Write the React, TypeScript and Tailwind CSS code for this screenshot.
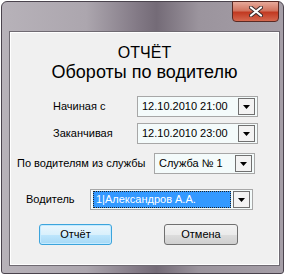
import React from "react";

const Arrow = () => (
  <svg width="7" height="4" viewBox="0 0 7 4">
    <path d="M0 0h7L3.5 4z" fill="#000" />
  </svg>
);

const Combo = ({
  value,
  width,
  selected,
}: {
  value: string;
  width: string;
  selected?: boolean;
}) => (
  <div
    className={`flex h-[21px] items-center border border-[#a7a7a7] bg-[#f4fbfb] pl-[2px] pr-[2px] ${width}`}
  >
    <div
      className={`flex h-[17px] flex-1 items-center overflow-hidden whitespace-nowrap pl-[2px] text-[11px] ${
        selected
          ? "border border-dotted border-[#222] bg-[#3399ff] text-white"
          : "text-black"
      }`}
    >
      {value}
    </div>
    <div className="ml-[2px] flex h-[17px] w-[17px] items-center justify-center border border-[#707070] bg-[#f3f3f3]">
      <Arrow />
    </div>
  </div>
);

export default function App() {
  return (
    <div
      className="h-[277px] w-[288px] bg-white pl-[1px] pt-[1px]"
      style={{ fontFamily: '"Liberation Sans", Arial, sans-serif' }}
    >
      <div className="relative flex h-[273px] w-[283px] flex-col rounded-t-[6px] rounded-b-[3px] border border-[#4a434d] bg-[linear-gradient(to_right,#b7b2b9_0%,#aca6ae_30%,#837a86_48%,#746b77_55%,#9b949d_70%,#a59ea7_100%)] pb-[7px] pl-[7px] pr-[3px] pt-[29px]">
        <div className="absolute left-[230px] top-[-1px] flex h-[21px] w-[47px] items-center justify-center rounded-b-[4px] border border-[#5a2a24] bg-[linear-gradient(to_bottom,#e6a99a_0%,#d27560_45%,#c23a22_55%,#d5684f_100%)]">
          <svg width="14" height="11" viewBox="0 0 14 11">
            <path
              d="M2 1.5l10 8M12 1.5l-10 8"
              stroke="#3b2a2a"
              strokeWidth="4"
              strokeLinecap="round"
            />
            <path
              d="M2 1.5l10 8M12 1.5l-10 8"
              stroke="#fff"
              strokeWidth="2.2"
              strokeLinecap="round"
            />
          </svg>
        </div>
        <div className="flex flex-1 flex-col border border-[#6f6a72] bg-[#f0f0f0] shadow-[inset_0_0_0_1px_#ffffff]">
          <div className="mt-[11px] text-center text-[16px] leading-[19px] text-black">
            ОТЧЁТ
          </div>
          <div className="text-center text-[18px] leading-[21px] text-black">
            Обороты по водителю
          </div>
          <div className="mt-[13px] flex items-center">
            <span className="ml-[43px] w-[84px] whitespace-nowrap text-[11px] text-black">
              Начиная с
            </span>
            <Combo value="12.10.2010 21:00" width="w-[121px]" />
          </div>
          <div className="mt-[6px] flex items-center">
            <span className="ml-[43px] w-[84px] whitespace-nowrap text-[11px] text-black">
              Заканчивая
            </span>
            <Combo value="12.10.2010 23:00" width="w-[121px]" />
          </div>
          <div className="mt-[9px] flex items-center">
            <span className="ml-[7px] w-[137px] whitespace-nowrap text-[11px] text-black">
              По водителям из службы
            </span>
            <Combo value="Служба № 1" width="w-[101px]" />
          </div>
          <div className="mt-[15px] flex items-center">
            <span className="ml-[16px] w-[64px] whitespace-nowrap text-[11px] text-black">
              Водитель
            </span>
            <Combo value="1|Александров А.А." width="w-[163px]" selected />
          </div>
          <div className="mt-[14px] flex">
            <button className="ml-[29px] h-[21px] w-[73px] rounded-[3px] border border-[#3ca4dc] bg-[linear-gradient(to_bottom,#eaf6fd_0%,#d9f0fc_50%,#bee6fd_51%,#a7d9f5_100%)] text-[11px] text-black shadow-[inset_0_0_0_1px_#c4eaff]">
              Отчёт
            </button>
            <button className="ml-[52px] h-[21px] w-[74px] rounded-[3px] border border-[#707070] bg-[linear-gradient(to_bottom,#f2f2f2_0%,#ebebeb_50%,#dddddd_51%,#cfcfcf_100%)] text-[11px] text-black">
              Отмена
            </button>
          </div>
        </div>
      </div>
    </div>
  );
}
